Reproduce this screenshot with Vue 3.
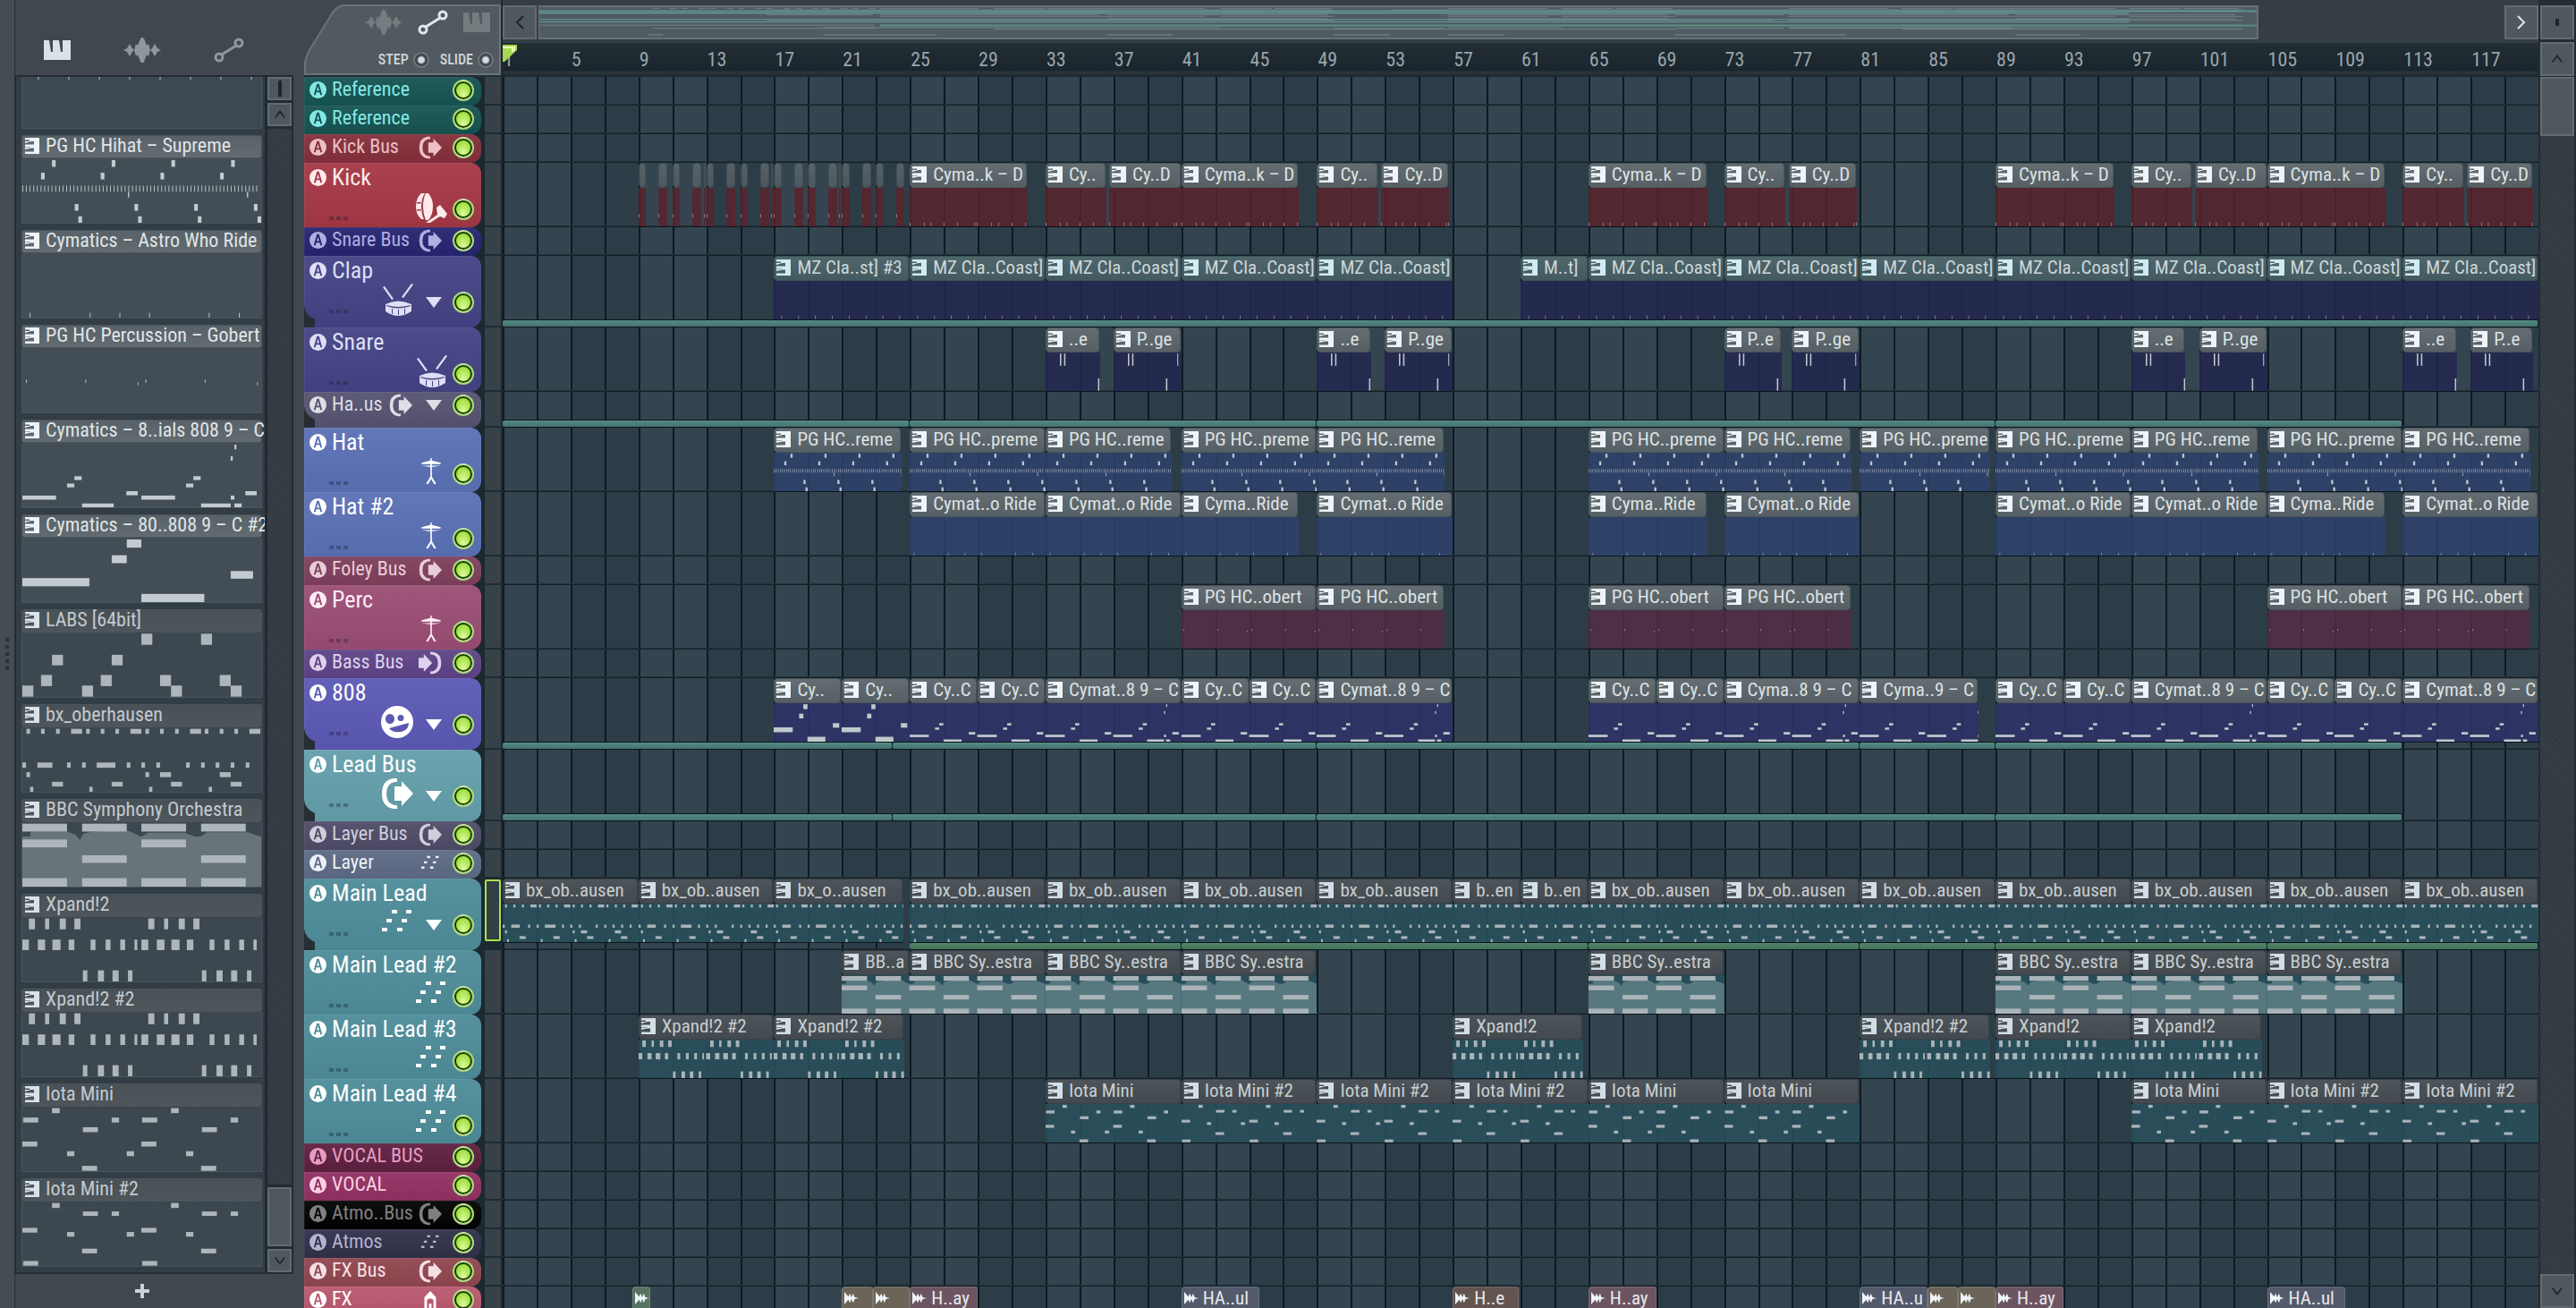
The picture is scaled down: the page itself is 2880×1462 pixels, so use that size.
<template>
  <div class="app">
    <div class="edge"><i v-for="n in 5" :key="n"></i></div>

    <aside class="picker">
      <nav class="picker-tabs">
        <button class="on" aria-label="Patterns"><svg viewBox="0 0 30 22"><path :d="icons.piano" /></svg></button>
        <button aria-label="Audio clips"><svg viewBox="0 0 42 28"><path :d="icons.wave" /></svg></button>
        <button aria-label="Automation clips"><svg viewBox="0 0 34 28" class="line"><circle cx="6" cy="22" r="4" /><circle cx="28" cy="6" r="4" /><path d="M9 19L25 9" /></svg></button>
      </nav>
      <div class="picker-main">
        <div class="picker-list">
          <div class="pat first"><div class="pat-body"><i v-for="n in 8" :key="n"></i></div></div>
          <div v-for="p in picker" :key="p.name" class="pat" :class="{ dim: p.dim }">
            <div class="pat-head">
              <svg class="keys" viewBox="0 0 16 18"><path :d="icons.keys" /></svg>
              <span>{{ p.name }}</span>
            </div>
            <svg class="pat-body" viewBox="0 0 588 220" preserveAspectRatio="none">
              <path v-if="p.pat === 'bbc'" class="vel" :d="velShape" />
              <rect v-for="(n, i) in patterns[p.pat]" :key="i" :x="n[0]" :y="n[1]" :width="n[2]" :height="n[3]" />
            </svg>
          </div>
        </div>
        <div class="picker-scroll">
          <button class="sq" aria-label="Split"><b></b></button>
          <button class="sq" aria-label="Scroll up"><svg viewBox="0 0 16 10"><path d="M2 9L8 1L14 9" /></svg></button>
          <div class="track"></div>
          <div class="thumb"></div>
          <button class="sq down" aria-label="Scroll down"><svg viewBox="0 0 16 10"><path d="M2 1L8 9L14 1" /></svg></button>
        </div>
      </div>
      <button class="add" aria-label="Add pattern"><svg viewBox="0 0 16 16"><path d="M6 0h4v6h6v4h-6v6H6v-6H0V6h6z" /></svg></button>
    </aside>

    <main class="playlist">
      <header class="top">
        <div class="corner">
          <svg class="corner-bg" viewBox="0 0 220 84"><path d="M1 83V70Q2 64 6 56L32 14Q37 6 46 6H219V83Z" /></svg>
          <div class="modes">
            <button aria-label="Audio"><svg viewBox="0 0 42 28"><path :d="icons.wave" /></svg></button>
            <button class="on" aria-label="Automation"><svg viewBox="0 0 34 28" class="line"><circle cx="6" cy="22" r="4" /><circle cx="28" cy="6" r="4" /><path d="M9 19L25 9" /></svg></button>
            <button aria-label="Pattern"><svg viewBox="0 0 30 22"><path :d="icons.piano" /></svg></button>
          </div>
          <div class="opts">
            <label>STEP<input v-model="opt" type="checkbox" value="step" /></label>
            <label>SLIDE<input v-model="opt" type="checkbox" value="slide" /></label>
          </div>
        </div>
        <div class="center">
          <div class="overview">
            <button class="sq wide" aria-label="Scroll left"><svg viewBox="0 0 10 16"><path d="M9 1L2 8L9 15" /></svg></button>
            <div class="map-area">
              <svg class="map" viewBox="0 0 121 38" preserveAspectRatio="none">
                <template v-for="(t, i) in tracks" :key="i">
                  <rect v-for="(c, j) in t.clips" :key="j" :x="c[0] - 1" :y="t.mapY" :width="c[1] - c[0]" height="1" :fill="t.fx ? '#8d8a86' : '#76868b'" />
                </template>
                <rect v-for="(l, i) in mapLines" :key="'l' + i" :x="l[0]" :y="l[1]" :width="l[2]" :height="l[3]" :fill="l[4]" />
              </svg>
            </div>
            <button class="sq wide lit" aria-label="Scroll right"><svg viewBox="0 0 10 16"><path d="M1 1L8 8L1 15" /></svg></button>
          </div>
          <div class="ruler">
            <span v-for="n in 30" :key="n">{{ n * 4 - 3 }}</span>
            <svg class="marker" viewBox="0 0 17 20"><path d="M0 0H16V6L2 19H0Z" /><path class="hi" d="M0 2H14V6L10 9V4H0Z" /></svg>
          </div>
        </div>
        <div class="top-right">
          <button class="sq wide" aria-label="Menu"><b class="dot"></b></button>
          <button class="sq wide" aria-label="Scroll up"><svg viewBox="0 0 16 10"><path d="M2 9L8 1L14 9" /></svg></button>
        </div>
      </header>

      <div class="body">
        <div class="rows">
          <div v-for="(t, i) in tracks" :key="i" class="row" :class="[t.size, { auto: t.strip }]">
            <div class="head" :style="{ backgroundColor: t.bg, color: t.fg }">
              <svg class="badge" viewBox="0 0 20 20"><circle cx="10" cy="10" r="10" fill="currentColor" /><path d="M6 16L9.500 4H10.500L14 16M7.500 12H12.500" fill="none" :stroke="t.bg" stroke-width="2" /></svg>
              <span class="name">{{ t.name }}</span>
              <div class="tools">
                <svg v-if="t.icon" class="ico" :viewBox="icoBox(t)"><path :d="icons[t.icon]" fill-rule="evenodd" /></svg>
                <svg v-if="t.strip" class="tri" viewBox="0 0 18 12"><path d="M0 0H18L9 12Z" /></svg>
                <button class="led" :aria-label="'Mute ' + t.name"></button>
              </div>
              <div v-if="t.size === 'big'" class="dots"><i></i><i></i><i></i></div>
              <svg v-if="t.strip" class="notch" viewBox="0 0 12 24"><path d="M0 0Q1 10 12 15V24H0Z" /></svg>
            </div>
            <div class="pick" :class="{ on: t.selected }"></div>
            <div class="lane">
              <div
                v-for="(c, j) in t.clips"
                :key="j"
                class="clip"
                :class="[t.tone, { tiny: c[1] - c[0] < 1 && !t.fx, fx: t.fx }]"
                :style="{ left: pos(c[0]), width: len(c[1] - c[0]), '--tint': c[4] || t.tint }"
              >
                <div class="clip-head">
                  <svg v-if="t.fx" class="keys" viewBox="0 0 18 18"><path d="M0 1L5 7L7 3L9 8L11 3L13 8L18 9L13 10L11 15L9 10L7 15L5 11L0 17Z" /></svg>
                  <svg v-else-if="c[1] - c[0] >= 1" class="keys" viewBox="0 0 16 18"><path :d="icons.keys" /></svg>
                  <span>{{ c[2] }}</span>
                </div>
                <svg v-if="!t.fx" class="clip-body" :viewBox="box(c)" preserveAspectRatio="none">
                  <path v-if="t.pat === 'bbc'" class="vel" :d="velShape" />
                  <rect v-for="(n, k) in patterns[c[3] || t.pat]" :key="k" :x="n[0]" :y="n[1]" :width="n[2]" :height="n[3]" />
                </svg>
              </div>
              <template v-if="t.strip">
                <div v-for="(s, k) in t.strip" :key="'s' + k" class="strip" :class="{ green: t.green }" :style="{ left: pos(s[0]), width: len(s[1] - s[0]) }"></div>
              </template>
            </div>
          </div>
        </div>
        <div class="vscroll">
          <div class="thumb"></div>
          <div class="track"></div>
          <button class="sq wide" aria-label="Scroll down"><svg viewBox="0 0 16 10"><path d="M2 1L8 9L14 1" /></svg></button>
        </div>
      </div>
    </main>
  </div>
</template>

<script setup>
import { ref } from 'vue'

const BARS = 120
const opt = ref([])

const pos = (bar) => ((bar - 1) / BARS) * 100 + '%'
const len = (bars) => (bars / BARS) * 100 + '%'

const icons = {
  piano: 'M0 0H6L8 13H10V0H17L19 13H21V0H30V22H0Z',
  keys: 'M0 0H16V18H0V15.500H10V11.500H7L0 13V11H6V10.500H0V7.500H10V4H7L0 6V4H5V2.500H0Z',
  wave: 'M0 14L4 12L7 7L10 12L12 14L14 7L16 9L19 1L21 -1L23 1L26 9L28 7L30 14L32 12L35 7L38 12L42 14L38 16L35 21L32 16L30 14L28 21L26 19L23 27L21 29L19 27L16 19L14 21L12 14L10 16L7 21L4 16Z',
  out: 'M18 1H14Q1 3 1 18Q1 33 14 35H18V31H15Q6 29 6 18Q6 7 15 5H18ZM15 10H23V4L36 18L23 32V26H15Z',
  in: 'M18 1H22Q35 3 35 18Q35 33 22 35H18V31H21Q30 29 30 18Q30 7 21 5H18ZM0 10H8V4L21 18L8 32V26H0Z',
  kick: 'M7 3H11Q7 9 7 18Q7 26 10 32H7Q1 27 1 18Q1 8 7 3ZM2 13H8V14.500H2ZM2 21H8V22.500H2ZM12 3H15Q20 9 20 18Q20 27 15 33H12Q9 26 9 18Q9 9 12 3ZM24 19L28 16L36 26L33 31L28 29L26 30L17 36H12L25 27Z',
  snare: 'M2 4L4 3L14 17L12 18ZM34 0L36 1L25 16L23 15ZM5 23Q19 16 34 23V31Q19 41 5 31ZM6 24V25Q19 30 33 25V24Q19 28 6 24ZM12 28H13V34H12ZM19 29H20V35H19ZM26 28H27V34H26Z',
  hat: 'M17 0H19V3L31 6V8H19V10H31L19 12V25L25 35H22L18 28L14 35H11L17 25V12L5 10H17V8H5V6L17 3Z',
  face: 'M18 0A18 18 0 1 0 18 36A18 18 0 1 0 18 0ZM10 9A5 5.500 0 1 1 10 20A5 5.500 0 1 1 10 9ZM22 10A3.500 3.500 0 1 1 22 17A3.500 3.500 0 1 1 22 10ZM9 25L31 19Q31 27 22 29Q12 30 9 25Z',
  steps: 'M12 4H18V8H12ZM28 4H34V8H28ZM6 14H12V18H6ZM23 14H29V18H23ZM1 24H7V28H1ZM18 24H24V28H18Z',
  up: 'M18 4L27 14V36H23V18Q18 14 13 18V36H9V14ZM16 24H20V36H16Z'
}

const icoBox = (t) => {
  if (t.icon === 'steps' && t.size === 'small') return '-4 -4 44 44'
  if (t.icon === 'hat') return '-4 -4 44 44'
  return '0 0 36 36'
}

// note shapes on a 588 x 220 canvas: [x, y, w, h]
const row = (y, h, w, xs) => xs.map((x) => (Array.isArray(x) ? [x[0], y, x[1], h] : [x, y, w, h]))
const every = (start, step, count) => Array.from({ length: count }, (_, i) => start + i * step)

const patterns = {
  hihat: [
    ...row(6, 23, 9, every(73, 147, 4)),
    ...row(49, 23, 9, every(46, 147, 4)),
    ...row(93, 21, 2, every(0, 9, 65)),
    ...row(114, 20, 3, [260, 553]),
    ...row(156, 23, 9, every(129, 147, 4)),
    ...row(198, 22, 9, every(138, 147, 4))
  ],
  ride: row(204, 16, 2, [18, 166, 239, 312, 459, 533]),
  perc: [...row(108, 11, 2, [9, 155, 303, 449]), ...row(117, 10, 2, [284, 578])],
  bass: [
    ...row(180, 14, 83, [0, 293, [513, 9]]),
    ...row(207, 14, 78, [147, [440, 73], [522, 18]]),
    ...row(139, 13, 18, [110, 403]),
    ...row(114, 13, 18, [128, 421]),
    ...row(165, 14, 28, [256, 549]),
    [513, 45, 5, 16],
    [522, 6, 5, 16]
  ],
  bass2: [[0, 138, 165, 28], [220, 60, 37, 27], [257, 6, 36, 28], [293, 192, 155, 28], [513, 114, 55, 26]],
  labs: [
    ...row(4, 38, 27, [293, 440]),
    ...row(76, 36, 27, [73, 220]),
    ...row(145, 38, 27, [46, 193, 339, 486]),
    ...row(181, 38, 27, [0, 147, 366, 513])
  ],
  bx: [
    ...row(5, 17, 9, [10, 46, 83, [120, 27], 157, 193, 229, [266, 27], 303, 339, 376, [413, 27], 449, 486, 522, [559, 27]]),
    ...row(120, 18, 9, [0, [37, 37], 110, 147, [183, 46], 257, 293, 330, 403, 440, 476, 513, 550]),
    ...row(153, 17, 9, [10, 303, [339, 27], [486, 27]]),
    ...row(186, 16, 27, [73, 220, 366, 513]),
    ...row(203, 17, 8, [19, 165, 312, 459])
  ],
  bbc: [
    ...row(5, 27, 110, [0, 147, 293, 440]),
    ...row(59, 27, 110, [0, 293]),
    ...row(113, 26, 110, [147, 440]),
    ...row(191, 29, 110, [0, 147, 293, 440])
  ],
  xpand: [
    ...row(5, 37, 15, [16, [56, 10], 92, 128, 310, [349, 10], 385, 421]),
    ...row(77, 36, 12, [[0, 16], [38, 18], [74, 20], [114, 14], 168, 205, 241, [276, 7], [293, 17], [331, 19], [367, 20], [405, 16], 461, 498, 534, [569, 8]]),
    ...row(182, 38, 11, [149, [186, 15], [222, 15], 260, 442, [478, 15], [514, 15], 553])
  ],
  iota: [
    ...row(5, 17, 19, [73, 366]),
    ...row(37, 17, 18, [[2, 37], 220, [295, 37], 513]),
    ...row(70, 17, 37, [149, 442]),
    ...row(119, 17, 37, [0, 293]),
    ...row(152, 17, 18, [110, 257, 403]),
    ...row(202, 17, 37, [147, 440])
  ],
  iota2: [
    ...row(5, 17, 19, [73, 366]),
    ...row(34, 15, 18, [[149, 37], 220, [442, 37], 513]),
    ...row(90, 16, 37, [0, 293]),
    ...row(104, 16, 18, [110, 257, 403]),
    ...row(161, 16, 37, [147, 440]),
    ...row(203, 16, 37, [2, 295])
  ],
  kick: row(198, 20, 2, [0, 62, 92, 147, 207, 282, 291, 354, 384, 442, 502]),
  hit: [[0, 150, 2, 20]],
  clap: row(198, 20, 2, every(34, 73, 8)),
  snare: [[62, 6, 6, 70], [80, 6, 6, 70], [227, 148, 6, 70], [276, 6, 4, 70]]
}

const velShape =
  'M0 50L20 48V32H110L130 42L142 60L150 40L165 34L200 30H262L280 42L292 50L310 36H400L425 50L440 48L455 34H555L575 44L588 50V220H0Z'

const picker = [
  { name: 'PG HC Hihat – Supreme', pat: 'hihat' },
  { name: 'Cymatics – Astro Who Ride', pat: 'ride' },
  { name: 'PG HC Percussion – Gobert', pat: 'perc' },
  { name: 'Cymatics – 8..ials 808 9 – C', pat: 'bass' },
  { name: 'Cymatics – 80..808 9 – C #2', pat: 'bass2' },
  { name: 'LABS [64bit]', pat: 'labs', dim: true },
  { name: 'bx_oberhausen', pat: 'bx', dim: true },
  { name: 'BBC Symphony Orchestra', pat: 'bbc', dim: true },
  { name: 'Xpand!2', pat: 'xpand', dim: true },
  { name: 'Xpand!2 #2', pat: 'xpand', dim: true },
  { name: 'Iota Mini', pat: 'iota', dim: true },
  { name: 'Iota Mini #2', pat: 'iota2', dim: true }
]

// same label on a list of [start, end] spans
const same = (label, spans, pat) => spans.map(([a, b]) => [a, b, label, pat])

const hits = [
  [9, 9.46], [10.2, 10.7], [11, 11.46], [12.2, 12.7], [12.85, 12.95], [13, 13.46], [14.2, 14.7], [15, 15.46],
  [16.2, 16.7], [16.8, 16.9], [17, 17.46], [18.2, 18.7], [19, 19.46], [20.2, 20.7], [20.85, 20.95], [21, 21.46],
  [22.2, 22.7], [23, 23.46], [24.2, 24.7]
]

const tracks = [
  { name: 'Reference', size: 'small', bg: '#155352', fg: '#84e9e4' },
  { name: 'Reference', size: 'small', bg: '#155352', fg: '#84e9e4' },
  { name: 'Kick Bus', size: 'small', bg: '#842f3b', fg: '#edc0c6', icon: 'out' },
  {
    name: 'Kick', size: 'big', bg: '#a43745', fg: '#ffeaec', icon: 'kick', tint: 'rgba(90, 34, 44, 0.84)', pat: 'kick', mapY: 1,
    clips: [
      ...same('', hits, 'hit'),
      ...same('Cyma..k – D', [[25, 31.95], [41, 47.9], [65, 72], [89, 96], [105, 112]]),
      ...same('Cy..', [[33, 36.6], [49, 52.6], [73, 76.6], [97, 100.6], [113, 116.6]]),
      ...same('Cy..D', [[36.75, 41], [52.8, 56.8], [76.8, 80.8], [100.75, 105], [116.8, 120.7]])
    ]
  },
  { name: 'Snare Bus', size: 'small', bg: '#262470', fg: '#b1aee2', icon: 'out' },
  {
    name: 'Clap', size: 'big', bg: '#444284', fg: '#dfdff5', icon: 'snare', tint: 'rgba(35, 39, 80, 0.88)', pat: 'clap', tone: 'teal', mapY: 3, strip: [[1, 121]],
    clips: [
      [17, 25, 'MZ Cla..st] #3'],
      ...same('MZ Cla..Coast]', [[25, 33], [33, 41], [41, 49], [49, 57], [65, 73], [73, 81], [81, 89], [89, 97], [97, 105], [105, 113], [113, 121]]),
      [61, 65, 'M..t]']
    ]
  },
  {
    name: 'Snare', size: 'big', bg: '#444284', fg: '#dfdff5', icon: 'snare', tint: 'rgba(35, 39, 80, 0.88)', pat: 'snare', mapY: 5,
    clips: [
      ...same('..e', [[33, 36.2], [49, 52.2], [97, 100.2], [113, 116.2]]),
      ...same('P..ge', [[37, 41], [53, 57], [77, 81], [101, 105]]),
      ...same('P..e', [[73, 76.4], [117, 120.7]])
    ]
  },
  { name: 'Ha..us', size: 'mid', bg: '#555370', fg: '#dfdee8', icon: 'out', strip: [[1, 25], [25, 49], [49, 89], [89, 113]] },
  {
    name: 'Hat', size: 'big', bg: '#5a70b4', fg: '#ffffff', icon: 'hat', tint: 'rgba(46, 66, 108, 0.88)', pat: 'hihat', mapY: 9,
    clips: [
      ...same('PG HC..reme', [[17, 24.5], [33, 40.45], [49, 56.5], [73, 80.5], [97, 104.5], [113, 120.5]]),
      ...same('PG HC..preme', [[25, 33], [41, 49], [65, 73], [81, 88.7], [89, 97], [105, 113]])
    ]
  },
  {
    name: 'Hat #2', size: 'big', bg: '#5a70b4', fg: '#ffffff', icon: 'hat', tint: 'rgba(46, 66, 108, 0.88)', pat: 'ride', mapY: 11,
    clips: [
      ...same('Cymat..o Ride', [[25, 33], [33, 41], [49, 57], [73, 81], [89, 97], [97, 105], [113, 121]]),
      ...same('Cyma..Ride', [[41, 47.9], [65, 72], [105, 112]])
    ]
  },
  { name: 'Foley Bus', size: 'small', bg: '#7f3f5c', fg: '#e9cdd8', icon: 'out' },
  {
    name: 'Perc', size: 'big', bg: '#994d73', fg: '#fdeef5', icon: 'hat', tint: 'rgba(82, 44, 68, 0.85)', pat: 'perc', mapY: 14,
    clips: same('PG HC..obert', [[41, 49], [49, 56.5], [65, 73], [73, 80.5], [105, 113], [113, 120.5]])
  },
  { name: 'Bass Bus', size: 'small', bg: '#5e4386', fg: '#ddd2ee', icon: 'in' },
  {
    name: '808', size: 'big', bg: '#5b58b4', fg: '#ffffff', icon: 'face', tint: 'rgba(46, 50, 104, 0.88)', pat: 'bass', mapY: 16,
    strip: [[1, 24], [24, 49], [49, 81], [81, 89], [89, 113]],
    clips: [
      ...same('Cy..', [[17, 21], [21, 25]], 'bass2'),
      ...same('Cy..C', [[25, 29], [29, 33], [41, 45], [45, 49], [65, 69], [69, 73], [89, 93], [93, 97], [105, 109], [109, 113]]),
      ...same('Cymat..8 9 – C', [[33, 41], [49, 57], [97, 105], [113, 121]]),
      [73, 81, 'Cyma..8 9 – C'],
      [81, 88, 'Cyma..9 – C']
    ]
  },
  { name: 'Lead Bus', size: 'big', bg: '#639eaa', fg: '#ffffff', icon: 'out', strip: [[1, 24], [24, 49], [49, 89], [89, 113]] },
  { name: 'Layer Bus', size: 'small', bg: '#4e4b67', fg: '#cfcedb', icon: 'out' },
  { name: 'Layer', size: 'small', bg: '#5d6a84', fg: '#eef1f8', icon: 'steps' },
  {
    name: 'Main Lead', size: 'big', bg: '#4d8c99', fg: '#ffffff', icon: 'steps', tint: 'rgba(40, 79, 91, 0.9)', pat: 'bx', tone: 'dark', mapY: 22, selected: true, green: true,
    strip: [[25, 41], [41, 65], [65, 81], [81, 89], [89, 105], [105, 121]],
    clips: [
      ...same('bx_ob..ausen', [[1, 9], [9, 17], [25, 33], [33, 41], [41, 49], [49, 57], [65, 73], [73, 81], [81, 89], [89, 97], [97, 105], [105, 113], [113, 121]]),
      [17, 24.6, 'bx_o..ausen'],
      ...same('b..en', [[57, 61], [61, 65]])
    ]
  },
  {
    name: 'Main Lead #2', size: 'big', bg: '#4d8c99', fg: '#ffffff', icon: 'steps', tint: 'rgba(40, 79, 91, 0.9)', pat: 'bbc', tone: 'dark', mapY: 25,
    clips: [[21, 25, 'BB..a'], ...same('BBC Sy..estra', [[25, 33], [33, 41], [41, 49], [65, 73], [89, 97], [97, 105], [105, 113]])]
  },
  {
    name: 'Main Lead #3', size: 'big', bg: '#4d8c99', fg: '#ffffff', icon: 'steps', tint: 'rgba(40, 79, 91, 0.9)', pat: 'xpand', tone: 'dark', mapY: 26,
    clips: [...same('Xpand!2 #2', [[9, 17], [17, 24.7], [81, 88.7]]), ...same('Xpand!2', [[57, 64.7], [89, 97], [97, 104.7]])]
  },
  {
    name: 'Main Lead #4', size: 'big', bg: '#4d8c99', fg: '#ffffff', icon: 'steps', tint: 'rgba(40, 79, 91, 0.9)', pat: 'iota', tone: 'dark', mapY: 27,
    clips: [
      ...same('Iota Mini', [[33, 41], [65, 73], [73, 81], [97, 105]]),
      ...same('Iota Mini #2', [[41, 49], [49, 57], [57, 65], [105, 113], [113, 121]], 'iota2')
    ]
  },
  { name: 'VOCAL BUS', size: 'small', bg: '#5e2040', fg: '#e89cc2' },
  { name: 'VOCAL', size: 'small', bg: '#923062', fg: '#f9d0e3' },
  { name: 'Atmo..Bus', size: 'small', bg: '#020202', fg: '#808080', icon: 'out' },
  { name: 'Atmos', size: 'small', bg: '#30304a', fg: '#b3b3d0', icon: 'steps' },
  { name: 'FX Bus', size: 'small', bg: '#90464f', fg: '#f6e0e3', icon: 'out' },
  {
    name: 'FX', size: 'small', bg: '#b9586f', fg: '#ffffff', icon: 'up', fx: true, mapY: 34,
    clips: [
      [8.67, 9.72, '', '', '#58735f'],
      [21, 22.85, '', '', '#6b6559'], [22.85, 25, '', '', '#6b6559'],
      [25, 29, 'H..ay', '', '#6c5560'], [41, 45.6, 'HA..ul', '', '#535a6b'],
      [57, 60.9, 'H..e', '', '#64544f'], [65, 69, 'H..ay', '', '#6c5560'],
      [81, 85, 'HA..u', '', '#535a6b'], [85, 86.8, '', '', '#6b6559'], [86.8, 89, '', '', '#6b6559'],
      [89, 93, 'H..ay', '', '#6c5560'], [105, 109.6, 'HA..ul', '', '#535a6b']
    ]
  }
]

const mapLines = [
  [0, 4, 121, 2, '#5f9496'],
  [0, 7, 112, 1, '#79b0b3'],
  [0, 15, 112, 1, '#69a3a6'],
  [0, 18, 112, 1, '#69a3a6'],
  [24, 22, 97, 2, '#5e8f7f']
]

// bass2 is a four bar pattern, everything else spans eight
const box = (c) => `0 0 ${((c[1] - c[0]) / (c[3] === 'bass2' ? 4 : 8)) * 588} 220`
</script>

<style>
html, body { background: #40484e; }
</style>

<style scoped>
.app { display: flex; height: 100vh; overflow: hidden; background: #40474e; font-family: 'Roboto Condensed', 'Roboto', sans-serif; font-size: 22px; color: #dfe4e7; }
.app * { box-sizing: border-box; }
button { appearance: none; border: 0; padding: 0; margin: 0; background: none; color: inherit; font: inherit; display: flex; align-items: center; justify-content: center; }
svg { display: block; fill: currentColor; overflow: hidden; }
.line { fill: none; stroke: currentColor; stroke-width: 3; }

.edge { width: 17px; flex: none; background: #454d54; border-right: 1px solid #262e35; display: flex; flex-direction: column; justify-content: center; align-items: center; gap: 4px; }
.edge i { width: 4px; height: 4px; background: #2b333a; }

/* pattern picker */
.picker { width: 311px; flex: none; display: flex; flex-direction: column; }
.picker-tabs { height: 84px; flex: none; display: flex; align-items: center; gap: 59px; padding: 28px 0 0 32px; color: #8f979c; }
.picker-tabs svg { height: 28px; }
.picker-tabs .on { color: #dbe2e7; }
.picker-tabs .on svg { height: 22px; }
.picker-main { flex: 1; min-height: 0; display: flex; border: 2px solid #222c33; border-left-width: 1px; background: #333d45; }
.picker-list { flex: 1; min-width: 0; overflow: hidden; padding: 0 3px 0 6px; display: flex; flex-direction: column; gap: 7px; }
.pat { flex: none; }
.pat-head { height: 26px; display: flex; align-items: center; gap: 7px; padding: 0 0 2px 3px; background: linear-gradient(#586268, #626b70); border: 1px solid #4b555b; border-radius: 3px; white-space: nowrap; color: #e0e5e8; }
.pat-head span { line-height: 22px; }
.keys { width: 16px; height: 18px; flex: none; color: #eef5fa; }
.pat-body { width: 100%; height: 73px; background: #434d55; border: 1px solid #4a545b; border-top: 0; fill: #c2cbd0; }
.pat.first .pat-body { height: 58px; background: #3d4952; display: flex; padding-left: 17px; gap: 32px; }
.pat.first i { width: 2px; height: 3px; background: #7d878d; }
.dim .pat-head { background: linear-gradient(#485157, #4e565b); color: #c3cacd; }
.dim .pat-body { background: #3d474f; fill: #adb6bb; }
.dim .keys { color: #d8e2e8; }
.vel { fill: #68747a; }

.picker-scroll { width: 30px; flex: none; display: flex; flex-direction: column; gap: 3px; border-left: 3px solid #202a31; background: #222c33; }
.sq { flex: none; width: 100%; height: 26px; background: #50585f; border: 2px solid #646c71; color: #1d262d; }
.sq svg { width: 14px; height: 10px; fill: none; stroke: currentColor; stroke-width: 2; }
.sq b { width: 4px; height: 18px; background: #1d262d; }
.track { flex: 1; background: repeating-linear-gradient(45deg, #394047 0 1px, #333a41 1px 4px); }
.thumb { height: 66px; flex: none; background: #50585f; border: 2px solid #646c71; }
.add { width: 284px; height: 38px; flex: none; color: #ccd3d7; }
.add svg { width: 16px; height: 16px; }

/* playlist */
.playlist { flex: 1; min-width: 0; margin-left: 12px; display: flex; flex-direction: column; }
.top { height: 86px; flex: none; display: flex; background: #353e45; }
.corner { width: 222px; flex: none; position: relative; display: flex; flex-direction: column; align-items: flex-end; background: #40474e; border-right: 2px solid #1d272e; border-bottom: 2px solid #222c33; }
.corner-bg { position: absolute; inset: 0; width: 220px; height: 84px; fill: #525a60; stroke: #6a7378; stroke-width: 2; }
.modes, .opts { position: relative; display: flex; align-items: center; }
.modes { padding: 11px 12px 0 0; gap: 17px; color: #747c80; }
.modes svg { height: 28px; }
.modes button:last-child svg { height: 22px; }
.modes .on { color: #e2e8ec; }
.opts { gap: 12px; padding: 16px 8px 0 0; font-size: 16px; font-weight: 500; line-height: 24px; color: #d0d6d9; }
.opts label { display: flex; align-items: center; gap: 5px; }
.opts input { appearance: none; margin: 0; width: 18px; height: 18px; border-radius: 50%; border: 2px solid #6e777c; background: radial-gradient(#d5dbde 0 3px, #3d464c 5px); }
.center { flex: 1; min-width: 0; display: flex; flex-direction: column; }
.overview { height: 48px; padding-top: 6px; display: flex; align-items: flex-start; }
.wide { width: 38px; height: 38px; }
.overview .sq svg { width: 10px; height: 16px; }
.overview .lit { color: #dfe5e8; }
.map-area { flex: 1; min-width: 0; padding-left: 2px; }
.map { width: 87.5%; height: 38px; background: #4f5d63; border: 2px solid #67716f; border-left-width: 1px; }
.ruler { position: relative; height: 38px; display: grid; grid-template-columns: repeat(30, 1fr); background: linear-gradient(#222d34, #1a252d 80%, #2a353c 86%, #1b262d); color: #9aa5ab; line-height: 38px; }
.ruler span { padding-left: 1px; }
.marker { position: absolute; left: 0; top: 2px; width: 17px; height: 20px; fill: #a5d951; }
.marker .hi { fill: #ecfcb4; }
.top-right { width: 42px; flex: none; display: flex; flex-direction: column; gap: 3px; padding: 6px 2px 0; background: #222c33; }
.top-right .dot { width: 4px; height: 8px; }

.body { flex: 1; min-height: 0; display: flex; }
.rows { flex: 1; min-width: 0; overflow: hidden; background: #1c2931; }
.row { display: flex; height: 32px; }
.row.mid { height: 40px; }
.row.big { height: 72px; }
.row.big.auto { height: 80px; }
.head { position: relative; width: 198px; flex: none; display: flex; align-items: flex-start; border-radius: 0 12px 12px 0; background-image: linear-gradient(rgba(255, 255, 255, 0.05), rgba(0, 0, 0, 0.04)); box-shadow: inset 1px 1px 0 rgba(255, 255, 255, 0.06); padding-left: 6px; }
.badge { width: 19px; height: 19px; margin-top: 5px; flex: none; }
.name { margin-left: 6px; line-height: 28px; white-space: nowrap; }
.big .badge { margin-top: 7px; }
.big .name { font-size: 26px; line-height: 32px; }
.tools { position: absolute; right: 8px; top: 0; height: 30px; display: flex; align-items: center; }
.ico { width: 28px; height: 26px; margin-right: 11px; }
.tri { width: 18px; height: 12px; margin-right: 12px; }
.auto .ico { margin-right: 14px; }
.big .tools { top: 34px; height: 36px; }
.big .ico { width: 36px; height: 36px; margin: -6px 6px 0 0; }
.big.auto .ico { margin-right: 14px; }
.led { width: 24px; height: 24px; border-radius: 50%; border: 2px solid rgba(200, 210, 210, 0.45); background: radial-gradient(ellipse at 50% 80%, #e2fb9c, #93dc34 70%); box-shadow: inset 0 0 0 2px #1c3a08; }
.dots { position: absolute; left: 28px; top: 60px; display: flex; gap: 3px; }
.dots i { width: 5px; height: 4px; background: rgba(30, 30, 50, 0.35); }
.notch { position: absolute; left: 0; bottom: 0; width: 12px; height: 24px; fill: #262e34; }
.pick { width: 18px; flex: none; margin: 0 2px 0 4px; background: #364148; border-bottom: 2px solid #1f2a32; }
.pick.on { background: #333e46; border: 2px solid #a9e34a; border-radius: 2px; margin-top: 1px; margin-bottom: 10px; }
.lane {
  flex: 1; min-width: 0; position: relative; box-shadow: inset 0 -1px 0 #13202a, inset 0 -2px 0 #22313a;
  background:
    repeating-linear-gradient(90deg, #0c1a24 0 2px, transparent 2px calc(100% / 60)),
    repeating-linear-gradient(90deg, #34454f 0 calc(100% / 30), #2d3d47 calc(100% / 30) calc(100% / 15));
}

.clip { position: absolute; top: 0; height: 72px; border-bottom: 1px solid #0b151c; font-size: 21px; }
.clip-head { height: 28px; margin-right: 1px; display: flex; align-items: center; gap: 7px; padding: 0 0 2px 2px; white-space: nowrap; background: linear-gradient(#646e72, #565f64); border: 1px solid #4a5459; border-radius: 4px; color: #dde2e4; line-height: 24px; }
.clip-body { width: 100%; height: 43px; background: var(--tint); fill: #c0c8cc; }
.teal .clip-head { background: linear-gradient(#4f666b, #435a60); border-color: #3b5157; color: #cdd7da; }
.teal .keys { color: #d0ecf2; }
.dark .clip-head { background: linear-gradient(#4d555a, #43494e); border-color: #3a4247; color: #c8ced0; }
.dark .keys { color: #d3dfe6; }
.dark .clip-body { fill: #a9b3b8; }
.dark .vel { fill: #587880; }
.tiny .clip-head { margin: 0; padding: 0; opacity: 0.75; }
.fx { height: 32px; border-bottom: 0; }
.fx .clip-head { height: 28px; margin: 0; gap: 5px; background: var(--tint); border-color: rgba(255, 255, 255, 0.12); color: #e6e8ea; }
.strip { position: absolute; bottom: 1px; height: 7px; background: linear-gradient(#568a84, #447470); border-right: 1px solid #17262b; border-radius: 2px; box-shadow: 0 -1px 0 #0b151c, 0 1px 0 #0b151c; }
.strip.green { background: linear-gradient(#53836a, #42745a); }

.vscroll { width: 42px; flex: none; display: flex; flex-direction: column; background: #222c33; padding: 0 2px; }
</style>
